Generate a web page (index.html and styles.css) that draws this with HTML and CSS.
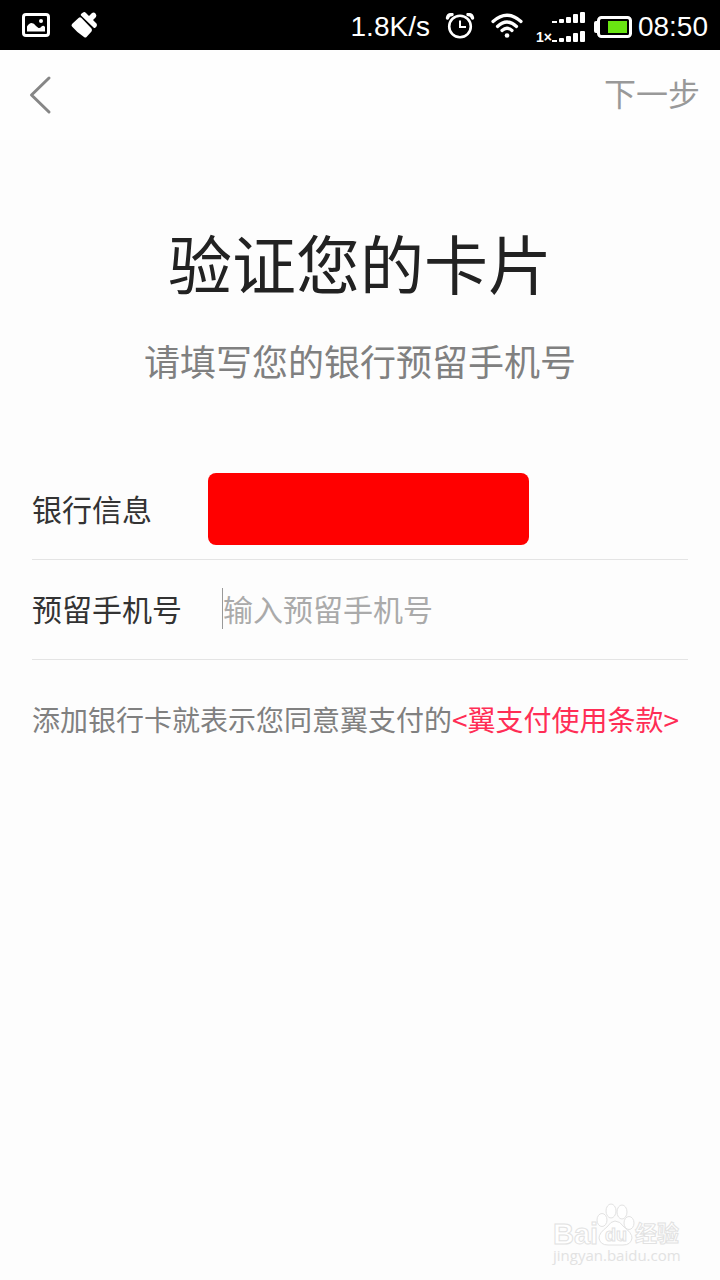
FILE: index.html
```html
<!DOCTYPE html>
<html lang="zh-CN">
<head>
  <meta charset="UTF-8">
  <meta name="viewport" content="width=device-width, initial-scale=1">
  <title>验证您的卡片</title>
  <link rel="stylesheet" href="styles.css">
</head>
<body>
  <div class="status-bar">
    <div class="status-left">
      <!-- Picture -->
      <svg width="28" height="24" viewBox="0 0 28 24">
        <rect x="1.5" y="1.5" width="25" height="21" rx="2.5" fill="none" stroke="#fff" stroke-width="3"/>
        <circle cx="19" cy="8" r="2" fill="#fff"/>
        <path d="M5 18.500V13.500Q7 10 9.500 10Q12 10 14 13L16.500 15Q18 15.500 19.500 13.500Q21.500 12 23 14V18.500Z" fill="#fff"/>
      </svg>
      <!-- Cleaner brush -->
      <svg width="28" height="28" viewBox="0 0 28 28" fill="#fff">
        <path d="M1 13L7.500 7Q9 5.500 10.500 7L20.500 17.500Q21.500 19 20.500 20.500L15.500 26Q14.500 27 13 26Q6 21.500 1 15.500Q0 14.500 1 13Z"/>
        <path d="M10 3L12 1.500Q13.500 .5 15 2L18 5L21 2Q23 1 24.500 2.500Q26 4 25 6L22 9L25.500 12.500Q26.500 14 25.500 15.500L24.500 16.500Q23.500 17.500 22.500 16.500L10 4.500Q9.500 4 10 3Z"/>
      </svg>
    </div>
    <div class="status-right">
      <span class="speed">1.8K/s</span>
      <!-- Alarm -->
      <svg class="alarm" width="30" height="26" viewBox="0 0 30 26" fill="none" stroke="#fff">
        <circle cx="15" cy="13.500" r="10.800" stroke-width="2.600"/>
        <path d="M15 7.500V14H21" stroke-width="2"/>
        <path d="M2.500 5Q3 1.500 7 1.500M27.500 5Q27 1.500 23 1.500" stroke-width="3.400" stroke-linecap="round"/>
      </svg>
      <!-- Wifi -->
      <svg class="wifi" width="32" height="26" viewBox="0 0 32 26" fill="none" stroke="#fff" stroke-width="3.200" stroke-linecap="round">
        <path d="M2 8.500Q16-4 30 8.500"/>
        <path d="M6.500 13.500Q16 4.500 25.500 13.500"/>
        <path d="M11 17.500Q16 13 21 17.500"/>
        <circle cx="16" cy="22.500" r="2.300" fill="#fff" stroke="none"/>
      </svg>
      <!-- Two sim signals -->
      <svg class="signal" width="50" height="32" viewBox="0 0 50 32" fill="#fff">
        <text class="sim" x="0" y="30">1×</text>
        <rect x="16" y="9" width="5" height="2"/>
        <rect x="23" y="7" width="5" height="4" rx="1"/>
        <rect x="30" y="5" width="5" height="6" rx="1"/>
        <rect x="37" y="2" width="5" height="9" rx="1"/>
        <rect x="44" y="0" width="5" height="11" rx="1"/>
        <rect x="16" y="28" width="5" height="2"/>
        <rect x="23" y="26" width="5" height="4" rx="1"/>
        <rect x="30" y="24" width="5" height="6" rx="1"/>
        <rect x="37" y="21" width="5" height="9" rx="1"/>
        <rect x="44" y="19" width="5" height="11" rx="1"/>
      </svg>
      <!-- Battery -->
      <svg class="battery" width="38" height="22" viewBox="0 0 38 22">
        <rect x="0" y="5" width="5" height="12" rx="2" fill="#fff"/>
        <rect x="4.500" y="1.500" width="32" height="19" rx="3" fill="#000" stroke="#fff" stroke-width="3"/>
        <rect x="14" y="5" width="19" height="12" fill="#69e512"/>
      </svg>
      <span class="clock">08:50</span>
    </div>
  </div>

  <header class="nav">
    <button class="back" type="button" aria-label="返回">
      <svg width="24" height="40" viewBox="0 0 24 40" fill="none" stroke="#868686" stroke-width="3" stroke-linecap="round" stroke-linejoin="round">
        <path d="M21 3L3.500 20L21 37"/>
      </svg>
    </button>
    <button class="next" type="button">下一步</button>
  </header>

  <main class="content">
    <h1>验证您的卡片</h1>
    <p class="subtitle">请填写您的银行预留手机号</p>

    <form class="card-form">
      <div class="row">
        <span class="label">银行信息</span>
        <div class="bank-info"></div>
      </div>
      <div class="row">
        <label class="label" for="phone">预留手机号</label>
        <input id="phone" class="phone" type="tel" placeholder="输入预留手机号">
      </div>
    </form>

    <p class="terms">添加银行卡就表示您同意翼支付的<a href="#">&lt;翼支付使用条款&gt;</a></p>
  </main>

  <svg class="watermark" width="140" height="72" viewBox="0 0 140 72">
    <g fill="#fff" stroke="#e2e2e2">
      <text class="wm-latin" x="2" y="44">Bai</text>
      <ellipse cx="51" cy="20" rx="5" ry="6.500"/>
      <ellipse cx="60" cy="11" rx="5" ry="7"/>
      <ellipse cx="71" cy="12" rx="5" ry="7"/>
      <ellipse cx="78" cy="23" rx="5" ry="6.500"/>
      <path d="M64 21Q69 21 73 27Q81 33 81 38Q80 45 72 45H57Q49 45 48 38Q48 33 56 27Q60 21 64 21Z"/>
      <text class="wm-du" x="54" y="41">du</text>
      <text class="wm-cjk" x="84" y="41">经验</text>
    </g>
    <text class="wm-url" x="2" y="61" fill="#e2e2e2">jingyan.baidu.com</text>
  </svg>
</body>
</html>
```

FILE: styles.css
```css
* {
  box-sizing: border-box;
}
body {
  margin: 0;
  min-height: 100vh;
  background: #fdfdfd;
  color: #333;
  font-family: "Noto Sans CJK SC", sans-serif;
}
button, input {
  font-family: inherit;
  padding: 0;
  border: 0;
  background: none;
}

/* Status bar */
.status-bar {
  display: flex;
  justify-content: space-between;
  align-items: center;
  height: 50px;
  padding: 0 12px 0 22px;
  background: #000;
  color: #fff;
  font-family: "Liberation Sans", Arial, sans-serif;
  font-size: 28px;
  line-height: 32px;
}
.status-left, .status-right {
  display: flex;
  align-items: center;
}
.status-left {
  gap: 21px;
}
.alarm {
  margin: 2px 0 0 15px;
}
.wifi {
  margin: 2px 0 0 16px;
}
.signal {
  margin: 6px 0 0 13px;
}
.sim {
  font-family: "Liberation Sans", Arial, sans-serif;
  font-size: 14px;
  font-weight: bold;
}
.battery {
  margin: 4px 6px 0 8px;
}
.speed, .clock {
  padding-top: 4px;
}

/* Top navigation */
.nav {
  display: flex;
  justify-content: space-between;
  align-items: center;
  height: 90px;
  padding: 0 20px 0 28px;
  background: #fefefe;
}
.back {
  display: flex;
}
.next {
  padding-bottom: 6px;
  color: #999;
  font-size: 32px;
  line-height: 48px;
}

/* Page content */
.content {
  padding: 85px 32px 0;
}
h1 {
  margin: 0 0 43px;
  color: #222;
  font-size: 64px;
  font-weight: normal;
  line-height: 72px;
  text-align: center;
}
.subtitle {
  margin: 0 0 80px;
  color: #808080;
  font-size: 36px;
  line-height: 40px;
  text-align: center;
}
.row {
  display: flex;
  align-items: center;
  height: 100px;
  padding-bottom: 2px;
  border-bottom: 1px solid #e4e4e4;
}
.label {
  width: 176px;
  padding-bottom: 2px;
  font-size: 30px;
  line-height: 40px;
}
.bank-info {
  width: 321px;
  height: 72px;
  border-radius: 8px;
  background: #f00;
}
.phone {
  flex: 1;
  height: 41px;
  margin-left: 14px;
  padding-bottom: 2px;
  border-left: 1px solid #999;
  color: #333;
  font-size: 30px;
}
.phone::placeholder {
  color: #aaa;
  opacity: 1;
}
.terms {
  margin: 39px 0 0;
  color: #808080;
  font-size: 28px;
  line-height: 40px;
}
.terms a {
  color: #ff2d55;
  text-decoration: none;
}

/* Watermark in the corner */
.watermark {
  position: absolute;
  right: 29px;
  bottom: 8px;
}
.wm-latin, .wm-du {
  font-family: "Liberation Sans", Arial, sans-serif;
  font-weight: bold;
}
.wm-latin {
  font-size: 29px;
}
.wm-du {
  font-size: 18px;
}
.wm-cjk {
  font-size: 22px;
  font-weight: bold;
}
.wm-url {
  font-family: "Open Sans", sans-serif;
  font-size: 15px;
}
```
